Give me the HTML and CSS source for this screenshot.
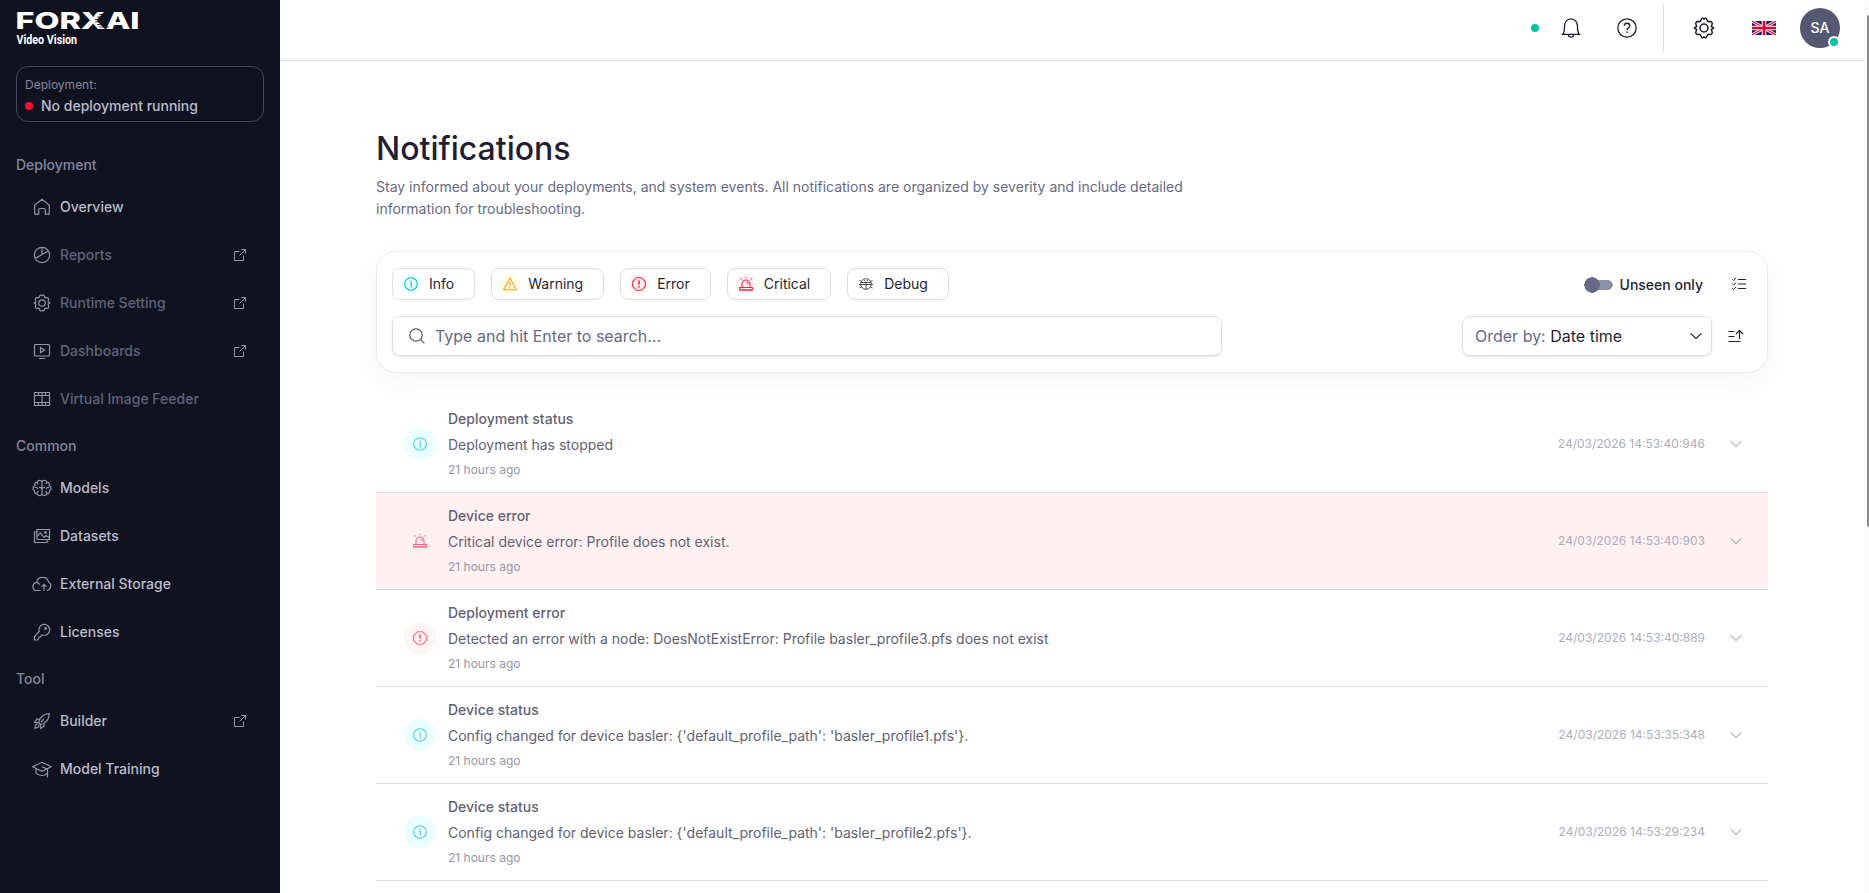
FILE: index.html
```
<!DOCTYPE html>
<html lang="en">
<head>
    <meta charset="UTF-8">
    <meta name="viewport" content="width=device-width, initial-scale=1.0">
    <title>Notifications</title>
    <link rel="stylesheet" href="styles.css">
</head>
<body>

<!-- Icon set -->
<svg class="sprite" xmlns="http://www.w3.org/2000/svg">
    <symbol id="i-home" viewBox="0 0 18 18"><path d="M1.700 7.200 9 1.200l7.300 6v9h-4v-4.700a1 1 0 0 0-1-1H6.700a1 1 0 0 0-1 1v4.700h-4z"/></symbol>
    <symbol id="i-pie" viewBox="0 0 18 18"><circle cx="9" cy="9" r="7.6"/><path d="M9 1.4V9M2.2 12.6 15.3 4.8"/></symbol>
    <symbol id="i-gear" viewBox="0 0 24 24"><path d="M8.700 3.300C9.300 1.200 10.900.9 12 2.200c1.100-1.300 2.700-1 3.300 1.100.4 1.500 1.400 2 2.800 1.600 2.100-.5 3.700 1.800 2.500 3.700-.9 1.400-.6 2.200.8 2.700 1.500.5 1.500 1 0 1.500-1.400.5-1.700 1.200-.8 2.600 1.200 1.900-.4 4.200-2.500 3.700-1.400-.4-2.400.1-2.800 1.600-.6 2.100-2.200 2.400-3.300 1.100-1.100 1.300-2.700 1-3.300-1.100-.4-1.500-1.400-2-2.800-1.600-2.100.5-3.700-1.800-2.500-3.700.9-1.400.6-2.100-.8-2.600-1.500-.5-1.500-1 0-1.500 1.400-.5 1.700-1.300.8-2.700C2.200 6.700 3.800 4.400 5.900 4.900c1.400.4 2.400-.1 2.800-1.600z"/><circle cx="12" cy="12" r="4.300"/></symbol>
    <symbol id="i-play" viewBox="0 0 18 18"><rect x="1.500" y="2.500" width="15" height="11.500" rx="1"/><path d="M7.500 5.600v5l4-2.500zM6 16.500h6"/></symbol>
    <symbol id="i-film" viewBox="0 0 18 18"><path d="M1.500 2.500h15v13h-15zM1.500 5.500h15M1.500 12.500h15M9 5.500v7M5.500 2.500v3M9 2.500v3M12.500 2.500v3M5.500 12.500v3M9 12.500v3M12.500 12.500v3"/></symbol>
    <symbol id="i-brain" viewBox="0 0 20 18"><path d="M10 3C9.300.6 5.500.8 5 3.200 3 3.200 2.200 5 2.900 6.500.4 7.500.3 10.600 2.500 11.700c-.4 2 .9 3.300 2.600 3.200.8 2.300 4.200 2.300 4.900 0 .7 2.300 4.100 2.300 4.900 0 1.700.1 3-1.200 2.600-3.200 2.200-1.100 2.100-4.200-.4-5.200.7-1.500-.1-3.300-2.100-3.300C14.500.8 10.700.6 10 3zM10 3v12M5 3.200c0 1 .6 1.600 1.500 1.700M15 3.200c0 1-.6 1.600-1.500 1.700M2.500 8.500c1.500-.6 3 0 3.500 1.500M17.500 8.500c-1.500-.6-3 0-3.500 1.500M5.100 14.900c-.3-1.200.3-2.200 1.600-2.500M14.900 14.900c.3-1.200-.3-2.200-1.600-2.500M7 8.300c1.800-.2 3 .9 3 2.500 0-1.600 1.200-2.700 3-2.500"/></symbol>
    <symbol id="i-images" viewBox="0 0 18 18"><path d="M4 2.500h12.500v10H4zM4 5H1.500v10.500h12.500v-3M4 10l3.200-4 4 4.500 2-2 3.300 2.500"/><circle cx="12.500" cy="5.500" r=".8"/></symbol>
    <symbol id="i-cloud" viewBox="0 0 20 18"><path d="M8.500 15.500H5c-5.300 0-5.300-7.600-.4-7.800C5.300.8 15.300.6 16.500 7c3.700 1.800 2.600 7.600-1.700 8.500M4.600 7.700c1.600-.2 2.800.8 3.200 2.200M12 15.800V9.600M9.500 11.800 12 9.300l2.500 2.500"/></symbol>
    <symbol id="i-key" viewBox="0 0 18 18"><path d="M6.200 8.500a5.400 5.400 0 1 1 3.600 3.500l-1.500.3-.5 1.700H6l-.3 1.800-1.200 1.200H1.400v-3.300z"/><circle cx="12.600" cy="5.500" r=".8"/></symbol>
    <symbol id="i-rocket" viewBox="0 0 18 18"><path d="M5.500 10.500C7 5.500 10.500 1.900 16.300 1.700c-.1 5.700-3.500 9.300-8.700 11zM6.900 7.200H3.700L1.700 10.500l3.800 0M11 11.200v3.100l-3.200 2.200-.2-3.800M5.200 12c-1.900-.2-3.300 1.500-3.300 4.200 2.800 0 4.300-1.300 4.200-3.300M5.500 10.500l2.100 2.200M8 10l3-3"/></symbol>
    <symbol id="i-cap" viewBox="0 0 20 18"><path d="M.8 6.800 10 2.300l9.200 4.500L10 11.300zM4 8.600v4.200c2.600 3.500 9 3.500 11 .6M10 6.700l5.500 2.500v8.300"/></symbol>
    <symbol id="i-external" viewBox="0 0 14 14"><path d="M6.500 3.500h-5v9h9v-5M8.500 1.500h4v4M12.500 1.500l-6 6"/></symbol>
    <symbol id="i-bell" viewBox="0 0 20 20"><path d="M1.700 16.300h16.600c-1.600-1.700-1.800-3.700-1.800-7.300 0-4.700-2.300-8.200-6.500-8.200S3.500 4.300 3.500 9c0 3.600-.2 5.600-1.800 7.300zM7.200 16.500c.4 3.500 5.200 3.500 5.600 0"/></symbol>
    <symbol id="i-help" viewBox="0 0 20 20"><circle cx="10" cy="10" r="9.200"/><path d="M7.200 7.700c.2-3.300 5.600-3.200 5.600 0 0 2-2.700 2.100-2.700 4.300M10.100 13.500v1.500"/></symbol>
    <symbol id="i-info" viewBox="0 0 14 14"><circle cx="7" cy="7" r="6.300"/><path d="M6 6h1.300v4.500M7 3.300v1.200"/></symbol>
    <symbol id="i-warning" viewBox="0 0 14 14"><path d="M7 1 13.400 12.800H.6zM7 5v4M7 10v1.200"/></symbol>
    <symbol id="i-error" viewBox="0 0 14 14"><path d="M4.500.7h5l3.800 3.800v5l-3.800 3.800h-5L.7 9.500v-5z"/><path d="M7 3.500v4.200M7 9v1.400" stroke-width="1.600"/></symbol>
    <symbol id="i-siren" viewBox="0 0 14 14"><path d="M3 10V7a4 4 0 0 1 8 0v3M7.300 5c1.300.1 2 .8 2 2.200M7 0v1M1.500 1.500l.8.800M12.500 1.500l-.8.800M.5 13h13"/><path d="M.7 10.500h12.600v2.500H.7z"/></symbol>
    <symbol id="i-bug" viewBox="0 0 14 14"><circle cx="7" cy="7" r="5.300"/><path d="M2 5.500h10M7 5.500v7M0 7.500h14M.5 3.500l2 1M13.500 3.500l-2 1M.5 11l2-1M13.500 11l-2-1M5 3.600h.9M8.100 3.600H9"/></symbol>
    <symbol id="i-search" viewBox="0 0 16 16"><circle cx="7" cy="7" r="6.200"/><path d="m11.400 11.400 4 4"/></symbol>
    <symbol id="i-chevron" viewBox="0 0 12 12"><path d="m.7 3.300 5.300 5.200 5.300-5.200"/></symbol>
    <symbol id="i-checklist" viewBox="0 0 14 14"><path d="M6 2.500h8M6 7h8M6 11.500h8M.4 2.300l1.300 1.200L4 .9M.4 6.800 1.700 8 4 5.400M.4 11.300l1.300 1.200L4 9.900"/></symbol>
    <symbol id="i-sort" viewBox="0 0 16 14"><path d="M.5 2.500h6M.5 7.500h6M.5 12.500h12M11.500 10V1.500M8 5l3.500-3.700L15 5"/></symbol>
</svg>

<div class="app">
    <aside class="sidebar">
        <svg class="logo" width="124" height="36" viewBox="0 0 124 36">
            <text class="logo-name" x="-0.500" y="18" textLength="124" lengthAdjust="spacingAndGlyphs">FORXAI</text>
            <path class="logo-cut" d="M83 3.500h10M81 6h10M79 8.500h9M79 11h8M81 13.500h10M83 16h10"/>
            <text class="logo-sub" x="0.500" y="33" textLength="60.500" lengthAdjust="spacingAndGlyphs">Video Vision</text>
        </svg>

        <div class="deployment">
            <span class="deployment-label">Deployment:</span>
            <span class="deployment-status"><i class="dot dot-red"></i>No deployment running</span>
        </div>

        <nav class="nav">
            <h2>Deployment</h2>
            <a class="nav-item"><svg><use href="#i-home"/></svg>Overview</a>
            <a class="nav-item disabled"><svg><use href="#i-pie"/></svg>Reports<svg class="external"><use href="#i-external"/></svg></a>
            <a class="nav-item disabled"><svg class="gear"><use href="#i-gear"/></svg>Runtime Setting<svg class="external"><use href="#i-external"/></svg></a>
            <a class="nav-item disabled"><svg><use href="#i-play"/></svg>Dashboards<svg class="external"><use href="#i-external"/></svg></a>
            <a class="nav-item disabled"><svg><use href="#i-film"/></svg>Virtual Image Feeder</a>
            <h2>Common</h2>
            <a class="nav-item"><svg><use href="#i-brain"/></svg>Models</a>
            <a class="nav-item"><svg><use href="#i-images"/></svg>Datasets</a>
            <a class="nav-item"><svg><use href="#i-cloud"/></svg>External Storage</a>
            <a class="nav-item"><svg><use href="#i-key"/></svg>Licenses</a>
            <h2>Tool</h2>
            <a class="nav-item"><svg><use href="#i-rocket"/></svg>Builder<svg class="external"><use href="#i-external"/></svg></a>
            <a class="nav-item"><svg><use href="#i-cap"/></svg>Model Training</a>
        </nav>
    </aside>

    <div class="page">
        <header class="topbar">
            <i class="dot dot-green"></i>
            <svg class="top-icon bell"><use href="#i-bell"/></svg>
            <svg class="top-icon help"><use href="#i-help"/></svg>
            <span class="divider"></span>
            <svg class="top-icon settings"><use href="#i-gear"/></svg>
            <svg class="flag" viewBox="0 0 24 14">
                <rect width="24" height="14" fill="#1b1464"/>
                <path d="M0 0l24 14M24 0L0 14" stroke="#fff" stroke-width="3"/>
                <path d="M0 0l24 14M24 0L0 14" stroke="#e4002b" stroke-width="1.200"/>
                <path d="M12 0v14M0 7h24" stroke="#fff" stroke-width="4.600"/>
                <path d="M12 0v14M0 7h24" stroke="#e4002b" stroke-width="2.600"/>
            </svg>
            <div class="avatar">SA<i class="dot dot-green"></i></div>
        </header>

        <main class="content">
            <h1>Notifications</h1>
            <p class="intro">Stay informed about your deployments, and system events. All notifications are organized by severity and include detailed information for troubleshooting.</p>

            <section class="filters">
                <div class="filter-row">
                    <button class="chip info"><span><svg><use href="#i-info"/></svg></span>Info</button>
                    <button class="chip warning"><span><svg><use href="#i-warning"/></svg></span>Warning</button>
                    <button class="chip error"><span><svg><use href="#i-error"/></svg></span>Error</button>
                    <button class="chip critical"><span><svg><use href="#i-siren"/></svg></span>Critical</button>
                    <button class="chip debug"><span><svg><use href="#i-bug"/></svg></span>Debug</button>
                    <div class="unseen"><span class="toggle"></span>Unseen only</div>
                    <svg class="checklist"><use href="#i-checklist"/></svg>
                </div>
                <div class="filter-row">
                    <div class="search">
                        <svg><use href="#i-search"/></svg>
                        <input type="text" placeholder="Type and hit Enter to search...">
                    </div>
                    <div class="order"><span>Order by:</span>&nbsp;Date time<svg><use href="#i-chevron"/></svg></div>
                    <svg class="sort"><use href="#i-sort"/></svg>
                </div>
            </section>

            <ul class="list">
                <li class="item">
                    <span class="badge info"><svg><use href="#i-info"/></svg></span>
                    <div class="text"><h3>Deployment status</h3><p>Deployment has stopped</p><small>21 hours ago</small></div>
                    <time>24/03/2026 14:53:40:946</time>
                    <svg class="expand"><use href="#i-chevron"/></svg>
                </li>
                <li class="item highlighted">
                    <span class="badge critical"><svg><use href="#i-siren"/></svg></span>
                    <div class="text"><h3>Device error</h3><p>Critical device error: Profile does not exist.</p><small>21 hours ago</small></div>
                    <time>24/03/2026 14:53:40:903</time>
                    <svg class="expand"><use href="#i-chevron"/></svg>
                </li>
                <li class="item">
                    <span class="badge error"><svg><use href="#i-error"/></svg></span>
                    <div class="text"><h3>Deployment error</h3><p>Detected an error with a node: DoesNotExistError: Profile basler_profile3.pfs does not exist</p><small>21 hours ago</small></div>
                    <time>24/03/2026 14:53:40:889</time>
                    <svg class="expand"><use href="#i-chevron"/></svg>
                </li>
                <li class="item">
                    <span class="badge info"><svg><use href="#i-info"/></svg></span>
                    <div class="text"><h3>Device status</h3><p>Config changed for device basler: {'default_profile_path': 'basler_profile1.pfs'}.</p><small>21 hours ago</small></div>
                    <time>24/03/2026 14:53:35:348</time>
                    <svg class="expand"><use href="#i-chevron"/></svg>
                </li>
                <li class="item">
                    <span class="badge info"><svg><use href="#i-info"/></svg></span>
                    <div class="text"><h3>Device status</h3><p>Config changed for device basler: {'default_profile_path': 'basler_profile2.pfs'}.</p><small>21 hours ago</small></div>
                    <time>24/03/2026 14:53:29:234</time>
                    <svg class="expand"><use href="#i-chevron"/></svg>
                </li>
            </ul>
        </main>
    </div>

    <div class="scrollbar"><span></span></div>
</div>

</body>
</html>
```
FILE: styles.css
```
* {
    box-sizing: border-box;
}
body {
    margin: 0;
    font-family: Inter, "Liberation Sans", sans-serif;
    font-size: 14px;
    color: #1f1f33;
    background-color: #fff;
}
h1, h2, h3, p, ul {
    margin: 0;
    padding: 0;
}
svg {
    flex: none;
    fill: none;
    stroke: currentColor;
    stroke-width: 1.2;
}
.sprite {
    display: none;
}
.app {
    display: flex;
    height: 100vh;
    overflow: hidden;
}
.dot {
    flex: none;
    width: 8px;
    height: 8px;
    border-radius: 50%;
}
.dot-red {
    background-color: #ff0a33;
}
.dot-green {
    background-color: #00c7a3;
}

/* Sidebar */
.sidebar {
    flex: none;
    width: 280px;
    padding: 11px 16px 0;
    background-color: #11121f;
    color: #b9bccc;
}
.logo {
    display: block;
    overflow: visible;
    stroke: none;
    fill: #fff;
}
.logo-name {
    font-size: 23px;
    font-weight: 800;
}
.logo-sub {
    font-family: Roboto, sans-serif;
    font-size: 12px;
    font-weight: 700;
}
.logo-cut {
    stroke: #11121f;
    stroke-width: 0.8;
}
.deployment {
    display: flex;
    flex-direction: column;
    height: 56px;
    margin-top: 19px;
    padding: 10px 8px 0;
    border: 1px solid #45465f;
    border-radius: 12px;
}
.deployment-label {
    font-size: 12px;
    line-height: 16px;
    color: #83879c;
}
.deployment-status {
    display: flex;
    align-items: center;
    gap: 8px;
    margin-top: 3px;
    line-height: 20px;
    font-weight: 500;
}
.nav {
    margin-top: 20px;
}
.nav h2 {
    padding: 13px 0 8px;
    font-size: 14px;
    line-height: 20px;
    font-weight: 500;
    color: #83879c;
}
.nav-item {
    display: flex;
    align-items: center;
    gap: 8px;
    height: 48px;
    padding: 0 17px 1px 16px;
    font-weight: 500;
}
.nav-item svg {
    width: 20px;
    height: 18px;
    color: #9295a8;
}
.nav-item .gear {
    stroke-width: 1.6;
}
.nav-item.disabled {
    color: #5f637b;
}
.nav-item .external {
    width: 14px;
    height: 14px;
    margin-left: auto;
    stroke-width: 1;
}

/* Top bar */
.page {
    flex: 1;
    min-width: 0;
}
.topbar {
    display: flex;
    align-items: center;
    justify-content: flex-end;
    height: 61px;
    padding: 0 24px 5px 0;
    border-bottom: 1px solid #dcdde3;
}
.top-icon {
    width: 20px;
    height: 20px;
    stroke-width: 1.3;
}
.bell {
    margin-left: 22px;
}
.help {
    margin-left: 36px;
}
.settings {
    width: 22px;
    height: 22px;
    margin-left: 29px;
    stroke-width: 1.7;
}
.divider {
    width: 1px;
    height: 48px;
    margin-left: 26px;
    background-color: #dcdde3;
}
.flag {
    width: 24px;
    height: 14px;
    margin-left: 37px;
    stroke: none;
}
.avatar {
    position: relative;
    width: 40px;
    height: 40px;
    margin-left: 24px;
    border-radius: 50%;
    background-color: #555872;
    color: #fff;
    line-height: 40px;
    font-weight: 500;
    text-align: center;
}
.avatar .dot {
    position: absolute;
    right: 0;
    bottom: 0;
    width: 12px;
    height: 12px;
    border: 2px solid #fff;
}

/* Content */
.content {
    padding: 64px 96px 0;
}
h1 {
    font-size: 32px;
    line-height: 48px;
    font-weight: 500;
}
.intro {
    max-width: 830px;
    margin-top: 3px;
    line-height: 22px;
    color: #666a84;
}

/* Filters */
.filters {
    height: 122px;
    margin-top: 31px;
    padding: 16px 15px;
    border: 1px solid #e8e8ec;
    border-radius: 20px;
    box-shadow: 0 8px 28px rgba(20, 20, 40, 0.04);
}
.filter-row {
    display: flex;
    align-items: center;
}
.filter-row + .filter-row {
    margin-top: 16px;
}
.chip {
    display: flex;
    align-items: center;
    gap: 8px;
    height: 32px;
    margin-right: 16px;
    padding: 0 20px 1px 8px;
    border: 1px solid #dcdde3;
    border-radius: 8px;
    background-color: #fff;
    font: inherit;
    color: inherit;
}
.chip span, .badge {
    display: flex;
    align-items: center;
    justify-content: center;
    width: 20px;
    height: 20px;
    border-radius: 50%;
}
.chip svg, .badge svg {
    width: 14px;
    height: 14px;
    stroke-width: 1.1;
}
.info span, .badge.info {
    background-color: #ebfeff;
    color: #10b4dc;
}
.warning span {
    background-color: #fffbe8;
    color: #ffa010;
}
.error span, .critical span, .badge.error {
    background-color: #fff2f2;
    color: #ff2448;
}
.debug span {
    color: #3c4248;
}
.debug svg {
    stroke-width: 0.9;
}
.unseen {
    display: flex;
    align-items: center;
    gap: 7px;
    margin: 1px 29px 0 auto;
    line-height: 16px;
    font-weight: 500;
}
.toggle {
    width: 29px;
    height: 16px;
    border-radius: 8px;
    background: radial-gradient(circle at 8px 8px, #666a85 7.5px, transparent 8px),
        linear-gradient(#8b8fa8, #8b8fa8) 8px 3px / 16px 10px no-repeat,
        radial-gradient(circle at 24px 8px, #8b8fa8 4.5px, transparent 5px);
}
.checklist {
    width: 14px;
    height: 14px;
    margin-right: 6px;
    stroke-width: 1;
}
.search, .order {
    display: flex;
    align-items: center;
    height: 40px;
    border: 1px solid #dcdde3;
    border-radius: 8px;
    box-shadow: 0 1px 2px rgba(20, 20, 40, 0.1);
    font-size: 16px;
}
.search {
    width: 830px;
    padding-left: 16px;
}
.search svg {
    width: 16px;
    height: 16px;
    color: #555;
}
.search input {
    flex: 1;
    margin-left: 10px;
    padding: 0;
    border: none;
    outline: none;
    background: none;
    font: inherit;
}
.search input::placeholder {
    color: #666a84;
}
.order {
    width: 250px;
    margin-left: auto;
    padding: 0 9px 0 12px;
}
.order span {
    color: #666a84;
}
.order svg {
    width: 12px;
    height: 12px;
    margin-left: auto;
    stroke-width: 1.1;
}
.sort {
    width: 16px;
    height: 14px;
    margin: 0 8px 0 16px;
}

/* Notification list */
.list {
    margin-top: 23px;
    list-style: none;
}
.item {
    display: flex;
    align-items: center;
    height: 97px;
    padding: 0 26px 0 28px;
    border-bottom: 1px solid #dcdde3;
}
.item.highlighted {
    background-color: #fff1f2;
}
.badge {
    width: 32px;
    height: 32px;
}
.badge svg {
    opacity: 0.7;
}
.badge.error {
    background-color: #fff5f5;
}
.badge.critical {
    color: #ff2448;
}
.text {
    flex: 1;
    margin-left: 12px;
    color: #626173;
}
.text h3 {
    font-size: 14px;
    line-height: 22px;
    font-weight: 500;
}
.text p {
    margin-top: 4px;
    line-height: 22px;
}
.text small {
    display: block;
    margin-top: 4px;
    font-size: 12px;
    line-height: 20px;
    color: #9496a8;
}
time {
    padding-bottom: 1px;
    font-size: 12px;
    color: #abadbf;
}
.expand {
    width: 12px;
    height: 12px;
    margin-left: 25px;
    color: #85879c;
    stroke-width: 1;
}

/* Scrollbar */
.scrollbar {
    flex: none;
    width: 5px;
    padding: 15px 0 0 3px;
    background-color: #fcfcfc;
}
.scrollbar span {
    display: block;
    height: 512px;
    border-radius: 2px 0 0 2px;
    background-color: #8b8b8b;
}
```
